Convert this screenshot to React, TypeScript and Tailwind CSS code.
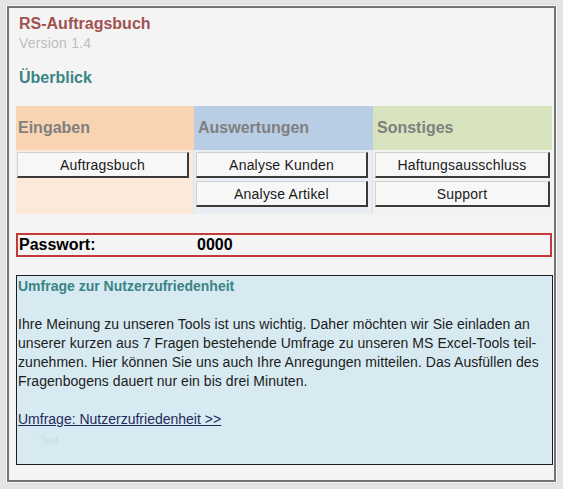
import React from "react";

const sans = { fontFamily: '"Liberation Sans", Arial, sans-serif' };

function XlButton({ label }: { label: string }) {
  return (
    <button className="h-[26px] w-full border border-t-[#d0d0d0] border-l-[#d0d0d0] border-r-[#3a3a3a] border-b-[#3a3a3a] border-r-2 border-b-2 bg-[#f7f7f7] text-[14px] leading-none tracking-[0.2px] text-[#1a1a1a]">
      {label}
    </button>
  );
}

export default function App() {
  return (
    <div className="h-[489px] w-[563px] bg-[#e4e4e4] pt-[4px] pl-[5px]" style={sans}>
      <div className="h-[480px] w-[553px] border border-[#dcdcdc] bg-[#fafafa] p-px">
        <div className="flex h-[476px] w-[549px] flex-col border-2 border-[#737373] bg-[#f4f4f4] pl-[7px] pr-[3px] pt-[7px]">
          <div className="pl-[3px]">
            <h1 className="text-[16px] font-bold leading-[18px] text-[#a0524f]">RS-Auftragsbuch</h1>
            <p className="mt-[2px] text-[14px] leading-[16px] tracking-[0.2px] text-[#bdbdbd]">Version 1.4</p>
            <h2 className="mt-[18px] text-[16px] font-bold leading-[18px] text-[#3a8486]">Überblick</h2>
          </div>

          <div className="mt-[19px] grid grid-cols-[178px_179px_179px]">
            <div className="flex h-[44px] items-center bg-[#f9d4b2] pl-[2px] text-[16px] font-bold text-[#7f7f7f]">Eingaben</div>
            <div className="flex h-[44px] items-center bg-[#b9cde5] pl-[4px] text-[16px] font-bold text-[#7f7f7f]">Auswertungen</div>
            <div className="flex h-[44px] items-center bg-[#d8e4bd] pl-[4px] text-[16px] font-bold text-[#7f7f7f]">Sonstiges</div>

            <div className="h-[64px] border-r border-[#e2e2e2] bg-[#fbe9da] pl-px pr-[4px] pt-[2px]">
              <XlButton label="Auftragsbuch" />
            </div>
            <div className="flex h-[64px] flex-col gap-[3px] border-r border-[#e0e0e0] bg-[#e9eef4] pl-[2px] pr-[4px] pt-[2px]">
              <XlButton label="Analyse Kunden" />
              <XlButton label="Analyse Artikel" />
            </div>
            <div className="flex h-[64px] flex-col gap-[3px] bg-[#f2f2f2] pl-[2px] pr-[2px] pt-[2px]">
              <XlButton label="Haftungsausschluss" />
              <XlButton label="Support" />
            </div>
          </div>

          <div className="mt-[19px] flex h-[24px] w-[536px] items-center border-2 border-[#c43a3a] text-[16px] font-bold text-black">
            <span className="w-[179px] pl-px">Passwort:</span>
            <span>0000</span>
          </div>

          <div className="mt-[18px] h-[190px] w-[537px] border border-[#1e1e1e] bg-[#d7eaf1] px-px pt-[1px] text-[14px] leading-[19px] text-[#1c1c1c]">
            <h3 className="text-[14px] font-bold leading-[19px] text-[#3a8486]">Umfrage zur Nutzerzufriedenheit</h3>
            <p className="mt-[19px] tracking-[0.05px]">
              Ihre Meinung zu unseren Tools ist uns wichtig. Daher möchten wir Sie einladen an
              <br />
              unserer kurzen aus 7 Fragen bestehende Umfrage zu unseren MS Excel-Tools teil-
              <br />
              zunehmen. Hier können Sie uns auch Ihre Anregungen mitteilen. Das Ausfüllen des
              <br />
              Fragenbogens dauert nur ein bis drei Minuten.
            </p>
            <a href="#" className="mt-[19px] block w-fit text-[#1f2a5e] underline">
              Umfrage: Nutzerzufriedenheit &gt;&gt;
            </a>
            <p className="mt-[2px] pl-[22px] text-[10px] text-[#c9dde4]">Text</p>
          </div>
        </div>
      </div>
    </div>
  );
}
